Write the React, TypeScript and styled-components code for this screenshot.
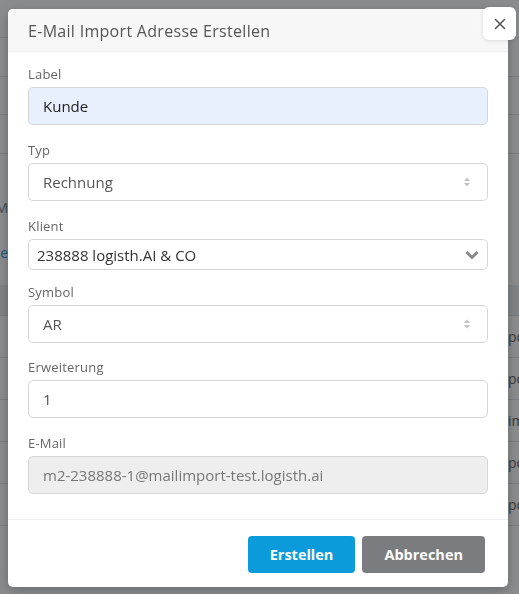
import styled, { createGlobalStyle } from 'styled-components';

const GlobalStyle = createGlobalStyle`
  html, body {
    margin: 0;
    padding: 0;
  }

  body {
    font-family: 'Open Sans', 'Noto Sans', Arial, sans-serif;
    background: #fff;
    overflow: hidden;
  }
`;

// page under the dialog
const Page = styled.div`
  width: 519px;
  height: 594px;
  overflow: hidden;
  background: #fff;
  color: #444;
  font-size: 14px;
`;

const ListRow = styled.div<{ $h: number }>`
  height: ${({ $h }) => $h}px;
  border-bottom: 1px solid #dcdfe3;
  box-sizing: border-box;
  display: flex;
  align-items: center;
`;

const InfoBlock = styled.div`
  height: 131px;
  box-sizing: border-box;
  padding-top: 44px;
  display: flex;
  flex-direction: column;
  gap: 26px;
`;

const EdgeText = styled.span<{ $link?: boolean }>`
  display: block;
  width: 8px;
  line-height: 19px;
  overflow: hidden;
  white-space: nowrap;
  direction: rtl;
  color: ${({ $link }) => ($link ? '#1b8fd0' : '#777')};
  font-size: 14px;
`;

const TableHead = styled.div`
  height: 30px;
  background: #e9ecef;
  border-bottom: 1px solid #d6d9dd;
`;

const TableRow = styled.div`
  height: 42px;
  border-bottom: 1px solid #dcdfe3;
  box-sizing: border-box;
  display: flex;
  align-items: center;
  justify-content: flex-end;
`;

const CellTail = styled.span`
  width: 11px;
  overflow: hidden;
  white-space: nowrap;
  color: #555;
  font-size: 14px;
`;

const Backdrop = styled.div`
  position: fixed;
  inset: 0;
  background: rgba(30, 34, 38, 0.52);
`;

const Dialog = styled.div`
  position: fixed;
  left: 8px;
  top: 9px;
  width: 500px;
  background: #fff;
  border-radius: 5px;
  box-shadow: 0 3px 12px rgba(0, 0, 0, 0.25);
`;

const Header = styled.div`
  height: 43px;
  box-sizing: border-box;
  padding: 1px 20px 0;
  display: flex;
  align-items: center;
  background: #f7f7f7;
  border-bottom: 1px solid #f0f0f0;
  border-radius: 5px 5px 0 0;
`;

const Title = styled.h4`
  margin: 0;
  font-size: 16px;
  font-weight: 400;
  color: #555;
  letter-spacing: 0.3px;
`;

const CloseButton = styled.button`
  position: absolute;
  top: -2px;
  right: -8px;
  width: 33px;
  height: 33px;
  padding: 0;
  border: none;
  border-radius: 6px;
  background: #fff;
  box-shadow: 0 1px 4px rgba(0, 0, 0, 0.12);
  display: flex;
  align-items: center;
  justify-content: center;
  color: #555;
  cursor: pointer;
`;

const Body = styled.div`
  padding: 12px 20px 25px;
`;

const Field = styled.div<{ $space?: number }>`
  margin-bottom: ${({ $space }) => $space ?? 15}px;

  &:last-child {
    margin-bottom: 0;
  }
`;

const FieldLabel = styled.label`
  display: block;
  height: 20px;
  line-height: 20px;
  margin-bottom: 3px;
  font-size: 13px;
  letter-spacing: 0.2px;
  color: #666;
`;

const TextInput = styled.input<{ $tone: 'autofill' | 'plain' | 'locked' }>`
  display: block;
  width: 100%;
  height: 38px;
  box-sizing: border-box;
  padding: 0 14px;
  border: 1px solid #d6d6d6;
  border-radius: 5px;
  font: inherit;
  font-size: 15px;
  outline: none;
  color: ${({ $tone }) => ($tone === 'autofill' ? '#222' : $tone === 'locked' ? '#777' : '#555')};
  background: ${({ $tone }) => ($tone === 'autofill' ? '#e8f0fe' : $tone === 'locked' ? '#eeeeee' : '#fff')};
`;

const SelectBox = styled.div<{ $compact?: boolean }>`
  height: ${({ $compact }) => ($compact ? 31 : 38)}px;
  box-sizing: border-box;
  padding: ${({ $compact }) => ($compact ? '0 8px 0 8px' : '0 16px 0 14px')};
  border: 1px solid #d6d6d6;
  border-radius: 5px;
  display: flex;
  align-items: center;
  justify-content: space-between;
  font-size: 15px;
  color: ${({ $compact }) => ($compact ? '#333' : '#555')};
  background: #fff;
`;

const Footer = styled.div`
  border-top: 1px solid #eee;
  padding: 16px 23px 14px;
  display: flex;
  justify-content: flex-end;
  gap: 7px;
`;

const Button = styled.button<{ $variant: 'primary' | 'muted' }>`
  height: 37px;
  padding: 0 22px;
  border: none;
  border-radius: 4px;
  font: inherit;
  font-size: 14.5px;
  font-weight: 700;
  color: #fff;
  background: ${({ $variant }) => ($variant === 'primary' ? '#0b9ada' : '#7b7c7f')};
  cursor: pointer;
`;

const Spinner = () => (
  <svg width="8" height="12" viewBox="0 0 8 12" fill="#c2c2c2">
    <path d="M4 1.5 7 5H1z" />
    <path d="M4 10.5 1 7h6z" />
  </svg>
);

const ChevronDown = () => (
  <svg width="14" height="10" viewBox="0 0 14 10">
    <path d="M1.5 2 7 7.5 12.5 2" fill="none" stroke="#8a8a8a" strokeWidth="3" />
  </svg>
);

const CloseIcon = () => (
  <svg width="14" height="14" viewBox="0 0 14 14">
    <path d="M2.5 2.5 11.5 11.5M11.5 2.5 2.5 11.5" stroke="#555" strokeWidth="1.6" strokeLinecap="round" />
  </svg>
);

const App = () => {
  return (
    <>
      <GlobalStyle />
      <Page>
        <ListRow $h={38} />
        <ListRow $h={39} />
        <ListRow $h={38} />
        <ListRow $h={39} />
        <InfoBlock>
          <EdgeText>TEXT M</EdgeText>
          <EdgeText $link>Adresse</EdgeText>
        </InfoBlock>
        <TableHead />
        <TableRow>
          <CellTail>post</CellTail>
        </TableRow>
        <TableRow>
          <CellTail>post</CellTail>
        </TableRow>
        <TableRow>
          <CellTail>import</CellTail>
        </TableRow>
        <TableRow>
          <CellTail>post</CellTail>
        </TableRow>
        <TableRow>
          <CellTail>post</CellTail>
        </TableRow>
      </Page>
      <Backdrop />
      <Dialog>
        <Header>
          <Title>E-Mail Import Adresse Erstellen</Title>
        </Header>
        <CloseButton aria-label="Schließen">
          <CloseIcon />
        </CloseButton>
        <Body>
          <Field>
            <FieldLabel>Label</FieldLabel>
            <TextInput $tone="autofill" readOnly value="Kunde" />
          </Field>
          <Field>
            <FieldLabel>Typ</FieldLabel>
            <SelectBox>
              <span>Rechnung</span>
              <Spinner />
            </SelectBox>
          </Field>
          <Field $space={12}>
            <FieldLabel>Klient</FieldLabel>
            <SelectBox $compact>
              <span>238888 logisth.AI &amp; CO</span>
              <ChevronDown />
            </SelectBox>
          </Field>
          <Field $space={14}>
            <FieldLabel>Symbol</FieldLabel>
            <SelectBox>
              <span>AR</span>
              <Spinner />
            </SelectBox>
          </Field>
          <Field>
            <FieldLabel>Erweiterung</FieldLabel>
            <TextInput $tone="plain" defaultValue="1" />
          </Field>
          <Field>
            <FieldLabel>E-Mail</FieldLabel>
            <TextInput $tone="locked" readOnly value="m2-238888-1@mailimport-test.logisth.ai" />
          </Field>
        </Body>
        <Footer>
          <Button $variant="primary">Erstellen</Button>
          <Button $variant="muted">Abbrechen</Button>
        </Footer>
      </Dialog>
    </>
  );
};

export default App;
